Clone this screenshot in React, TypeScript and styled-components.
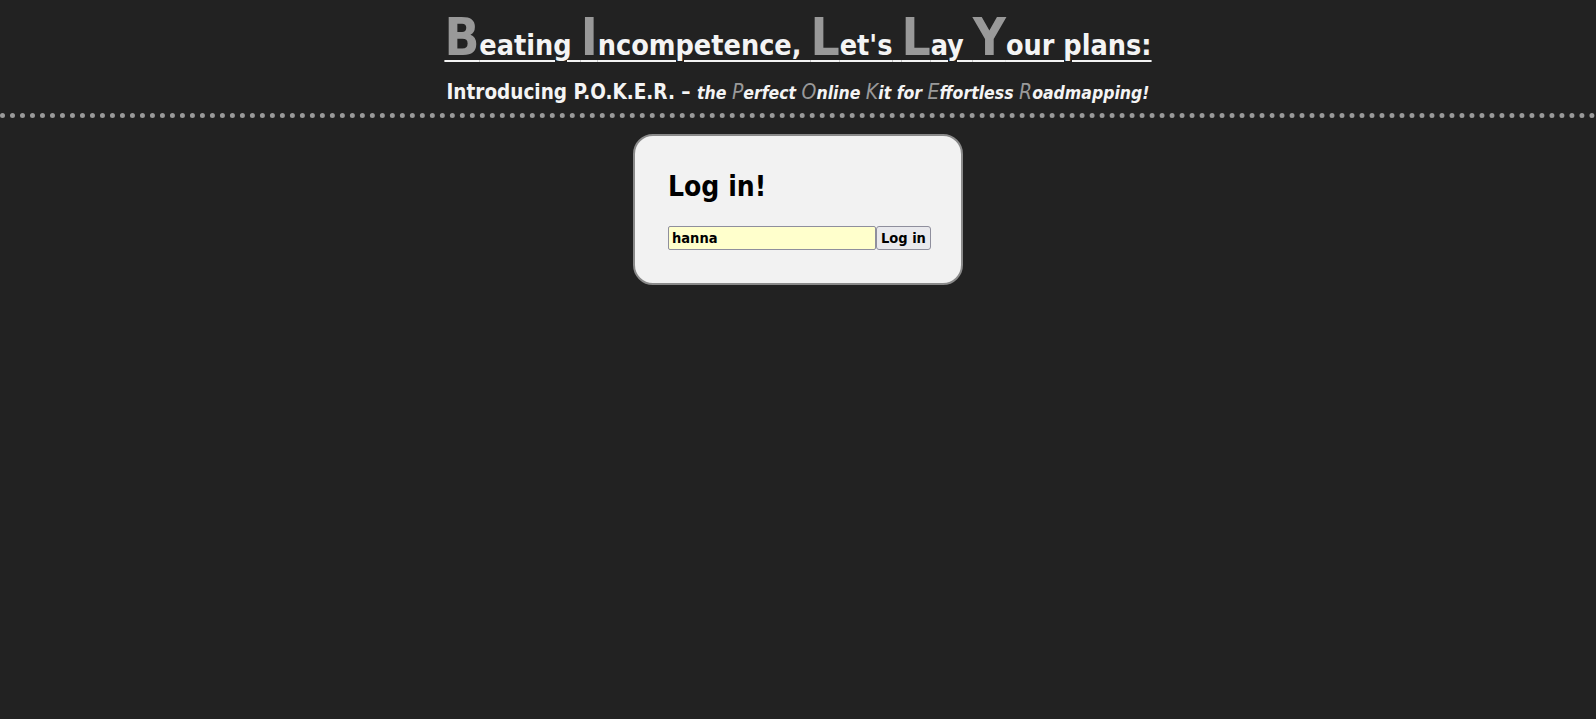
import React, { useState } from 'react'
import styled, { createGlobalStyle } from 'styled-components'

const GlobalStyle = createGlobalStyle`
    body {
        margin: 0;
        background: #222222;
        font-family: "DejaVu Sans Condensed", "Liberation Sans", sans-serif;
    }
`

const Header = styled.header`
    text-align: center;
    padding-top: 10px;
    padding-bottom: 2px;
    border-bottom: 5px dotted #9a9a9a;
    color: #f4f4f4;
`

const Title = styled.h1`
    margin: 0;
    font-size: 28.5px;
    font-weight: bold;
    line-height: 56px;
    text-decoration: underline;
    text-decoration-thickness: 2px;
    text-underline-offset: 5px;
`

const Initial = styled.span`
    font-size: 51px;
    color: #999999;
`

const Subtitle = styled.h2`
    margin: 0;
    font-size: 20.5px;
    font-weight: bold;
    line-height: 36px;
`

const Tagline = styled.em`
    font-size: 17.5px;
`

const SmallInitial = styled.span`
    font-size: 21px;
    font-weight: normal;
    color: #999999;
`

const Main = styled.main`
    display: flex;
    justify-content: center;
    padding-top: 16px;
`

const LoginBox = styled.div`
    width: 263px;
    padding: 33px 30px 33px 33px;
    background: #f2f2f2;
    border: 2px solid #8a8a8a;
    border-radius: 20px;
`

const LoginTitle = styled.h3`
    margin: 0 0 21px;
    font-size: 28px;
    font-weight: bold;
    line-height: 36px;
    color: #000;
`

const Row = styled.form`
    display: flex;
`

const NameInput = styled.input`
    width: 208px;
    height: 24px;
    flex-shrink: 0;
    box-sizing: border-box;
    padding: 1px 3px;
    font-family: inherit;
    font-size: 14.5px;
    font-weight: bold;
    background: #ffffcc;
    border: 1px solid #8f8f9d;
    border-radius: 2px;
    color: #000;
`

const LoginButton = styled.button`
    height: 24px;
    flex-shrink: 0;
    white-space: nowrap;
    padding: 0 4px;
    font-family: inherit;
    font-size: 14.5px;
    font-weight: bold;
    background: #e9e9ed;
    border: 1px solid #8f8f9d;
    border-radius: 3px;
    color: #000;
`

const App = () => {
    const [name, setName] = useState('hanna')

    return (
        <>
            <GlobalStyle />
            <Header>
                <Title>
                    <Initial>B</Initial>eating <Initial>I</Initial>ncompetence, <Initial>L</Initial>et's{' '}
                    <Initial>L</Initial>ay <Initial>Y</Initial>our plans:
                </Title>
                <Subtitle>
                    Introducing P.O.K.E.R. –{' '}
                    <Tagline>
                        the <SmallInitial>P</SmallInitial>erfect <SmallInitial>O</SmallInitial>nline{' '}
                        <SmallInitial>K</SmallInitial>it for <SmallInitial>E</SmallInitial>ffortless{' '}
                        <SmallInitial>R</SmallInitial>oadmapping!
                    </Tagline>
                </Subtitle>
            </Header>
            <Main>
                <LoginBox>
                    <LoginTitle>Log in!</LoginTitle>
                    <Row onSubmit={e => e.preventDefault()}>
                        <NameInput value={name} onChange={e => setName(e.target.value)} />
                        <LoginButton type="submit">Log in</LoginButton>
                    </Row>
                </LoginBox>
            </Main>
        </>
    )
}

export default App
